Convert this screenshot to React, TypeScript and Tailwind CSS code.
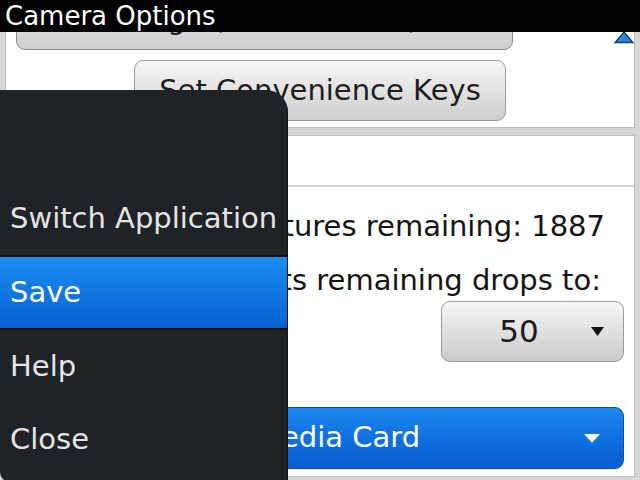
import React from "react"

const font = { fontFamily: '"DejaVu Sans", "Liberation Sans", sans-serif' }

function MenuItem({ label, active, h }: { label: string; active?: boolean; h: string }) {
  return (
    <div
      className={`${h} flex items-center pl-[10px] text-[29px] ${
        active
          ? "bg-gradient-to-b from-[#1c8ef0] to-[#0a5fd3] text-white"
          : "text-[#e4e4e4]"
      }`}
    >
      {label}
    </div>
  )
}

export default function App() {
  return (
    <div className="relative w-[640px] h-[480px] overflow-hidden bg-[#d6d6d6]" style={font}>
      {/* Title bar */}
      <div className="relative z-10 h-[32px] bg-black text-white text-[26px] leading-[32px] pl-[5px]">
        Camera Options
      </div>

      {/* Scroll indicator */}
      <svg className="absolute z-10 left-[614px] top-[31px]" width="20" height="13" viewBox="0 0 20 13">
        <path d="M10 1 L19 11.5 L1 11.5 Z" fill="#2a86e0" stroke="#0d3a70" strokeWidth="1.3" />
      </svg>

      {/* Panel 1 (scrolled, top hidden under title) */}
      <div className="-mt-[42px] mx-[5px] h-[138px] bg-white border-x border-b border-[#bdbdbd] pl-[10px] pr-[10px]">
        <div className="w-[497px] h-[60px] rounded-b-[9px] border border-[#8c8c8c] bg-gradient-to-b from-[#e6e6e6] to-[#d0d0d0] flex items-center pl-[105px] text-[29px] text-[#1a1a1a]">
          Large (3264 x 2448)
        </div>
        <div className="flex mt-[10px] pl-[118px]">
          <div className="w-[372px] h-[61px] rounded-[9px] border border-[#9c9c9c] bg-gradient-to-b from-[#f7f7f7] to-[#cdcdcd] flex items-center justify-center text-[29px] text-[#1e1e1e]">
            Set Convenience Keys
          </div>
        </div>
      </div>

      {/* Panel 2 */}
      <div className="mt-[7px] mx-[5px] h-[342px] bg-white border border-[#c4c4c4]">
        <div className="h-[51px] border-b-2 border-[#d4d4d4]" />
        <div className="mt-[22px] h-[34px] flex justify-end pr-[29px] text-[29px] leading-[34px] text-[#141414] whitespace-nowrap">
          Number of pictures remaining: 1887
        </div>
        <div className="mt-[20px] h-[34px] flex justify-end pr-[33px] text-[29px] leading-[34px] text-[#141414] whitespace-nowrap">
          Warn when # of shots remaining drops to:
        </div>
        <div className="mt-[4px] flex justify-end pr-[10px]">
          <div className="w-[183px] h-[61px] rounded-[9px] border border-[#9a9a9a] bg-gradient-to-b from-[#f6f6f6] to-[#cbcbcb] flex items-center text-[31px] text-[#1a1a1a]">
            <span className="w-[154px] text-center">50</span>
            <svg className="-ml-[6px]" width="15" height="11" viewBox="0 0 15 11">
              <path d="M1 1 L14 1 L7.5 10 Z" fill="#111" />
            </svg>
          </div>
        </div>
        <div className="mt-[45px] ml-[9px] mr-[10px] h-[62px] rounded-[9px] border border-[#0b4fae] bg-gradient-to-b from-[#1a86ec] to-[#0a5bd2] flex items-center text-[29px] text-white">
          <span className="pl-[240px] flex-1">Media Card</span>
          <svg className="mr-[22px]" width="18" height="11" viewBox="0 0 18 11">
            <path d="M1 1 L17 1 L9 10 Z" fill="#f2f2f2" />
          </svg>
        </div>
      </div>

      {/* Menu */}
      <div className="absolute z-20 left-0 top-[90px] w-[288px] h-[392px] rounded-tr-[22px] rounded-bl-[10px] bg-[#1f2226] border-r border-[#15171a] flex flex-col">
        <div className="h-[93px]" />
        <MenuItem label="Switch Application" h="h-[72px]" />
        <div className="h-[2px] bg-[#101214]" />
        <MenuItem label="Save" active h="h-[71px]" />
        <div className="h-[2px] bg-[#101214]" />
        <MenuItem label="Help" h="h-[74px]" />
        <MenuItem label="Close" h="h-[72px]" />
      </div>
    </div>
  )
}
